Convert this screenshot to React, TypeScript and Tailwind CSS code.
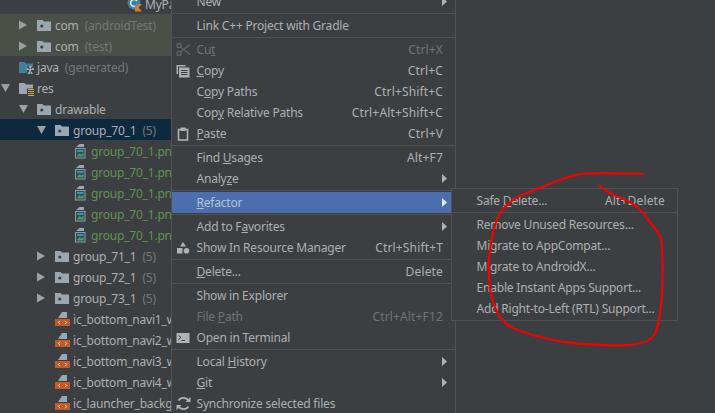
import type { ReactNode } from "react";

function Folder({ color = "#9aa7b0", dot = true }: { color?: string; dot?: boolean }) {
  return (
    <svg width="16" height="16" viewBox="0 0 16 16" className="shrink-0">
      <path d="M0 3h5.500l1.500 1.500h7V14H0z" fill={color} />
      {dot ? <circle cx="4.800" cy="9" r="1.600" fill="#3c3f41" /> : null}
    </svg>
  );
}

function JavaFolder() {
  return (
    <svg width="16" height="16" viewBox="0 0 16 16" className="shrink-0">
      <path d="M0 3h5.500l1.500 1.500h7v3H8V14H0z" fill="#40809f" />
      <g fill="#a8b2b8">
        <circle cx="11" cy="11" r="1" />
        <path d="M11 11 8 8.500l-.5 2.500zM11 11l3.500-2.500.5 2.500zM11 11l-2.500 3.500 2.500.8zM11 11l3 3.500-2 .8zM11 11l-1-4h3z" />
      </g>
    </svg>
  );
}

function ResFolder() {
  return (
    <svg width="16" height="16" viewBox="0 0 16 16" className="shrink-0">
      <path d="M0 3h5.500l1.500 1.500h7v4H8V14H0z" fill="#9aa7b0" />
      <path d="M9 9.500h6M9 11.500h6M9 13.500h6M9 15.500h6" stroke="#d9a343" strokeWidth="1" />
    </svg>
  );
}

function ArrowRight() {
  return (
    <svg width="9" height="10" viewBox="0 0 9 10" className="shrink-0">
      <path d="M0 0.500 8 5 0 9.500z" fill="#9da0a2" />
    </svg>
  );
}

function ArrowDown() {
  return (
    <svg width="9" height="8" viewBox="0 0 9 8" className="shrink-0">
      <path d="M0 0h9L4.500 8z" fill="#9da0a2" />
    </svg>
  );
}

function PngIcon() {
  return (
    <svg width="11" height="16" viewBox="0 0 11 16" className="shrink-0">
      <path d="M4.500 1H9v3H1z" fill="#9aa7b0" />
      <rect x="0.500" y="5.500" width="9.500" height="9.500" fill="#2f4a55" stroke="#8f9ca5" />
      <path d="M2 13l2.500-3 2 1.500L8.500 9.500V13.500H2z" fill="#4f9a5c" />
      <rect x="2" y="7" width="6.500" height="2" fill="#3f8fb4" />
    </svg>
  );
}

function XmlIcon() {
  return (
    <svg width="15" height="16" viewBox="0 0 15 16" className="shrink-0">
      <path d="M7 1h5v6H3z" fill="#9aa7b0" />
      <rect x="0" y="8" width="15" height="7" fill="#c15a25" />
      <path d="M5 9.800 3.300 11.500 5 13.200M10 9.800l1.700 1.700L10 13.200" fill="none" stroke="#e8e8e8" strokeWidth="0.900" />
    </svg>
  );
}

function KotlinClassIcon() {
  return (
    <svg width="16" height="16" viewBox="0 0 16 16" className="shrink-0">
      <circle cx="7" cy="7" r="6.500" fill="#40809f" />
      <path d="M10 5a3.500 3.500 0 1 0 0 4" fill="none" stroke="#dfe3e6" strokeWidth="1.500" />
      <path d="M8 8h7l-3.500 3.500L15 15.500H8z" fill="#e8752c" />
      <path d="M8 8h4l-4 4z" fill="#4a90d9" />
    </svg>
  );
}

function TreeRow({ pad, arrow, icon, name, hint, tone, rowClass }: { pad: number; arrow?: "right" | "down"; icon: ReactNode; name: string; hint?: string; tone?: string; rowClass?: string }) {
  return (
    <div className={`flex h-[21px] items-center whitespace-nowrap ${rowClass || ""}`} style={{ paddingLeft: pad }}>
      {arrow ? <div className="flex w-[18px] shrink-0 items-center">{arrow === "right" ? <ArrowRight /> : <ArrowDown />}</div> : null}
      {icon}
      <span className={`ml-[2px] pt-[2px] ${tone || "text-[#adafb1]"}`}>{name}</span>
      {hint ? <span className="ml-[6px] pt-[2px] text-[#74777a]">{hint}</span> : null}
    </div>
  );
}

function ScissorsIcon() {
  return (
    <svg width="15" height="15" viewBox="0 0 15 15">
      <g fill="none" stroke="#5f6264" strokeWidth="1.500">
        <circle cx="3" cy="3.500" r="2" />
        <circle cx="3" cy="11.500" r="2" />
        <path d="M4.500 5 14 12.500M4.500 10 14 2.500" />
      </g>
    </svg>
  );
}

function CopyIcon() {
  return (
    <svg width="14" height="14" viewBox="0 0 14 14">
      <path d="M.5 1h9v1.500H2V10H.5z" fill="#afb1b3" />
      <rect x="3" y="3.500" width="10.500" height="10" fill="#afb1b3" />
      <path d="M5 6.500h6.500M5 8.500h6.500M5 10.500h6.500" stroke="#3c3f41" />
    </svg>
  );
}

function PasteIcon() {
  return (
    <svg width="14" height="14" viewBox="0 0 14 14">
      <rect x="2.500" y="2.500" width="9" height="10.500" fill="none" stroke="#afb1b3" strokeWidth="1.600" />
      <rect x="4.500" y="0.500" width="5" height="3.500" fill="#afb1b3" />
    </svg>
  );
}

function ShapesIcon() {
  return (
    <svg width="14" height="14" viewBox="0 0 14 14">
      <path d="M7 1l3 4.500H4z" fill="#afb1b3" />
      <rect x="1" y="7" width="5.500" height="5.500" fill="#afb1b3" />
      <circle cx="10.500" cy="9.800" r="2.800" fill="#afb1b3" />
    </svg>
  );
}

function TerminalIcon() {
  return (
    <svg width="14" height="14" viewBox="0 0 14 14">
      <rect x="0.500" y="2" width="13" height="10" fill="#afb1b3" />
      <path d="M2.500 4.500 5 6.500 2.500 8.500M5.500 9.500H9" fill="none" stroke="#3c3f41" strokeWidth="1" />
    </svg>
  );
}

function SyncIcon() {
  return (
    <svg width="15" height="15" viewBox="0 0 15 15">
      <g fill="none" stroke="#afb1b3" strokeWidth="1.800">
        <path d="M13 5.500A6 6 0 0 0 2.500 4.500" />
        <path d="M2 9.500A6 6 0 0 0 12.500 10.500" />
      </g>
      <path d="M9.500 6H14.500V1zM5.500 9H.5v5z" fill="#afb1b3" />
    </svg>
  );
}

function MenuRow({ label, shortcut, icon, sub, disabled, active }: { label: ReactNode; shortcut?: string; icon?: ReactNode; sub?: boolean; disabled?: boolean; active?: boolean }) {
  const tone = disabled ? "text-[#707375]" : active ? "text-[#bcc2d0]" : "text-[#adafb1]";
  return (
    <div className={`flex h-[21px] items-center whitespace-nowrap pr-[12px] ${tone} ${active ? "bg-[#4b6eaf]" : ""}`}>
      <div className="flex w-[24.5px] shrink-0 items-center pl-[4px]">{icon}</div>
      <span>{label}</span>
      <span className="ml-auto tracking-[0.15px]">{shortcut}</span>
      {sub ? (
        <svg width="5" height="9" viewBox="0 0 5 9" className="-mr-[4px] ml-auto">
          <path d="M0 0l5 4.500L0 9z" fill={active ? "#e4e6ea" : "#afb1b3"} />
        </svg>
      ) : null}
    </div>
  );
}

function Sep() {
  return <div className="my-[1px] h-px bg-[#515151]" />;
}

const pngNames = [0, 1, 2, 3, 4];
const closedGroups = ["group_71_1", "group_72_1", "group_73_1"];
const xmlNames = ["ic_bottom_navi1_w", "ic_bottom_navi2_w", "ic_bottom_navi3_w", "ic_bottom_navi4_w", "ic_launcher_backgr"];

export default function App() {
  return (
    <div className="relative flex h-[413px] w-[715px] overflow-hidden bg-[#3c3f41] font-['Noto_Sans',sans-serif] text-[12px] tracking-[-0.2px]">
      <div className="-mt-[7px] w-[171px] shrink-0 overflow-hidden">
        <TreeRow pad={127} icon={<KotlinClassIcon />} name="MyPage" />
        <TreeRow pad={19} arrow="right" icon={<Folder />} name="com" hint="(androidTest)" rowClass="bg-[#4a5047]" />
        <TreeRow pad={19} arrow="right" icon={<Folder />} name="com" hint="(test)" rowClass="bg-[#4a5047]" />
        <TreeRow pad={19} icon={<JavaFolder />} name="java" hint="(generated)" />
        <TreeRow pad={1} arrow="down" icon={<ResFolder />} name="res" />
        <TreeRow pad={19} arrow="down" icon={<Folder />} name="drawable" />
        <TreeRow pad={37} arrow="down" icon={<Folder />} name="group_70_1" hint="(5)" rowClass="bg-[#0d293e]" />
        {pngNames.map((n) => (
          <TreeRow key={n} pad={75} icon={<div className="mr-[3px]"><PngIcon /></div>} name="group_70_1.png" tone="text-[#5f9350]" />
        ))}
        {closedGroups.map((name) => (
          <TreeRow key={name} pad={37} arrow="right" icon={<Folder />} name={name} hint="(5)" />
        ))}
        {xmlNames.map((name) => (
          <TreeRow key={name} pad={55} icon={<div className="mr-[1px]"><XmlIcon /></div>} name={name} />
        ))}
      </div>

      <div className="-mt-[9px] w-[285px] shrink-0 self-start border-x border-[#515151]">
        <MenuRow label="New" sub />
        <Sep />
        <MenuRow label="Link C++ Project with Gradle" />
        <Sep />
        <MenuRow label={<>Cu<u>t</u></>} shortcut="Ctrl+X" icon={<ScissorsIcon />} disabled />
        <MenuRow label={<><u>C</u>opy</>} shortcut="Ctrl+C" icon={<CopyIcon />} />
        <MenuRow label={<>C<u>o</u>py Paths</>} shortcut="Ctrl+Shift+C" />
        <MenuRow label={<>Cop<u>y</u> Relative Paths</>} shortcut="Ctrl+Alt+Shift+C" />
        <MenuRow label={<><u>P</u>aste</>} shortcut="Ctrl+V" icon={<PasteIcon />} />
        <Sep />
        <MenuRow label={<>Find <u>U</u>sages</>} shortcut="Alt+F7" />
        <MenuRow label={<>Analy<u>z</u>e</>} sub />
        <Sep />
        <MenuRow label={<><u>R</u>efactor</>} sub active />
        <Sep />
        <MenuRow label={<>Add to F<u>a</u>vorites</>} sub />
        <MenuRow label="Show In Resource Manager" shortcut="Ctrl+Shift+T" icon={<ShapesIcon />} />
        <Sep />
        <MenuRow label={<><u>D</u>elete...</>} shortcut="Delete" />
        <Sep />
        <MenuRow label="Show in Explorer" />
        <MenuRow label={<>File <u>P</u>ath</>} shortcut="Ctrl+Alt+F12" disabled />
        <MenuRow label="Open in Terminal" icon={<TerminalIcon />} />
        <Sep />
        <MenuRow label={<>Local <u>H</u>istory</>} sub />
        <MenuRow label={<><u>G</u>it</>} sub />
        <MenuRow label="Synchronize selected files" icon={<SyncIcon />} />
      </div>

      <div className="absolute left-[451px] top-[188px] w-[227px] border border-[#515151] bg-[#3c3f41] py-px">
        <MenuRow label={<>Safe <u>D</u>elete...</>} shortcut="Alt+Delete" />
        <Sep />
        <MenuRow label="Remove Unused Resources..." />
        <MenuRow label="Migrate to AppCompat..." />
        <MenuRow label="Migrate to AndroidX..." />
        <MenuRow label="Enable Instant Apps Support..." />
        <MenuRow label="Add Right-to-Left (RTL) Support..." />
      </div>

      <svg width="270" height="200" viewBox="0 0 810 600" className="absolute left-[445px] top-[160px]">
        <path
          d="M595 42C540 40 470 38 430 40C400 41 385 45 330 65C300 78 270 88 235 103C200 118 175 140 160 170C148 195 140 230 135 270C130 310 130 345 135 385C142 430 155 470 190 497C225 515 270 530 350 545C400 552 470 557 530 556C580 555 615 545 628 525C640 500 648 450 651 400C654 340 654 280 648 235C640 215 625 200 610 180C595 155 570 130 530 115C505 105 480 92 465 78"
          fill="none"
          stroke="#f40000"
          strokeWidth="6.500"
          strokeLinecap="round"
        />
      </svg>
    </div>
  );
}
